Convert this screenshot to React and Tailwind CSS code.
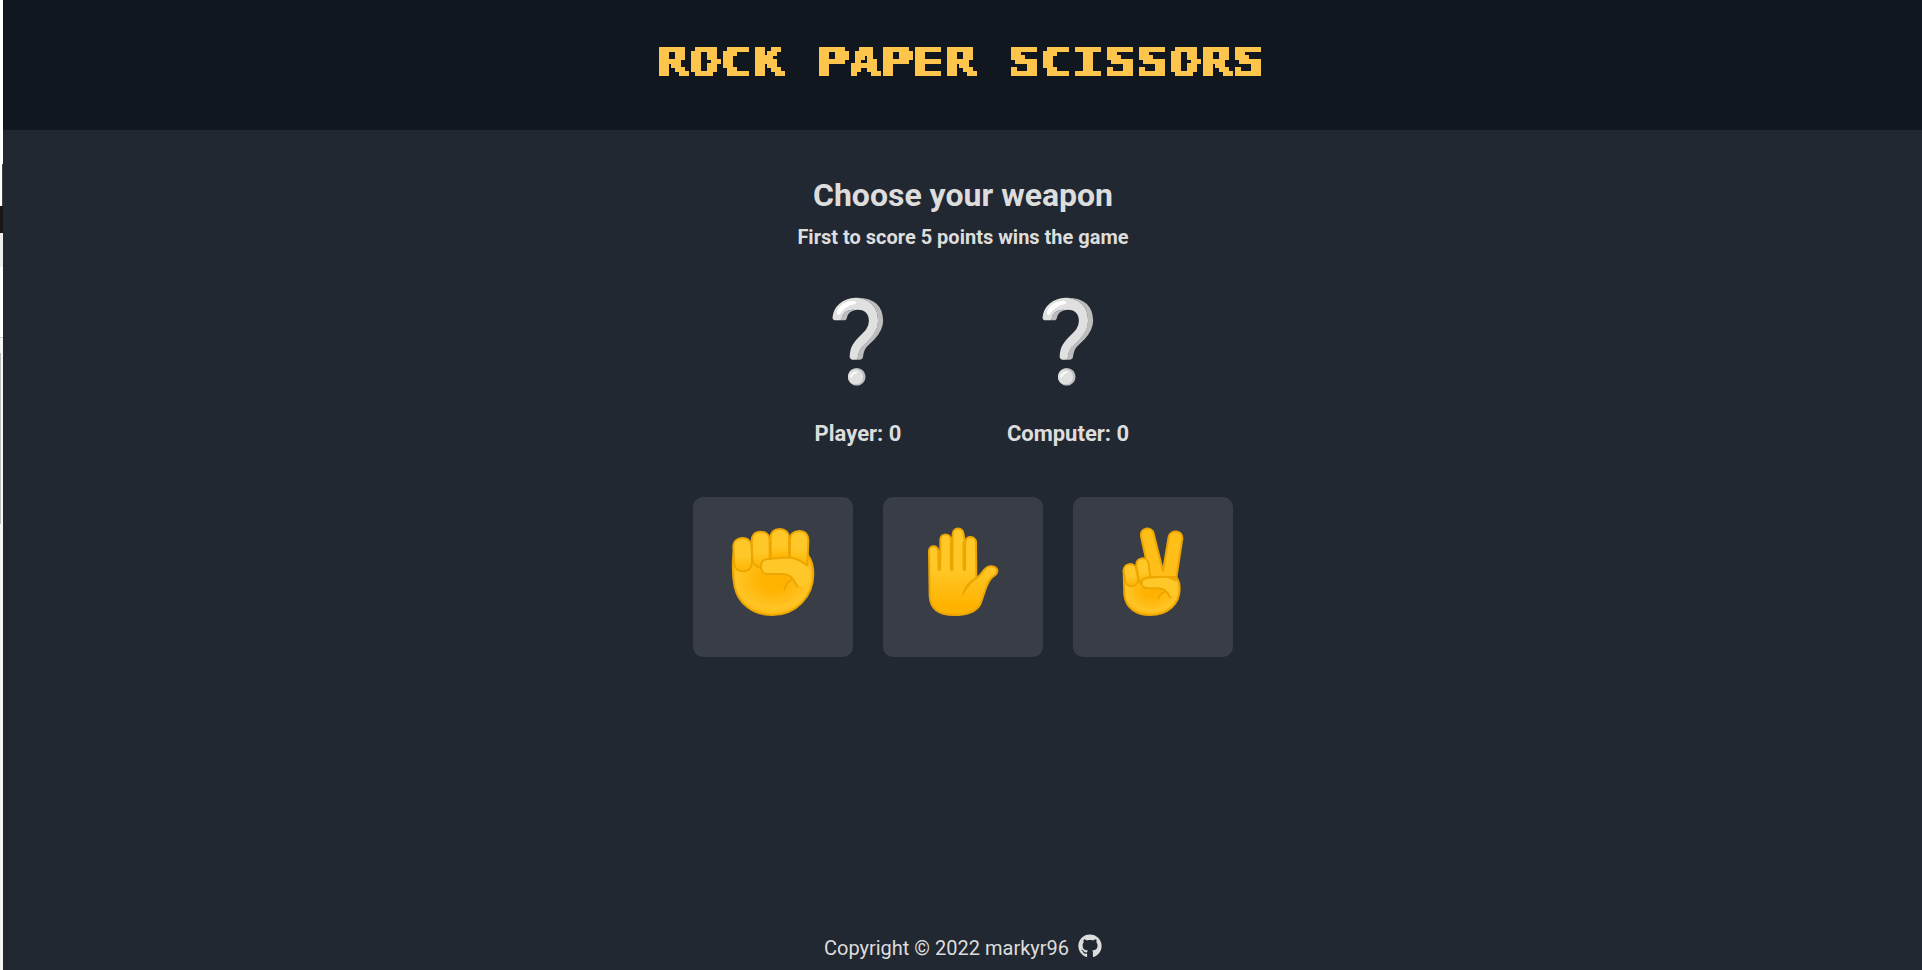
import { FaGithub } from "react-icons/fa";

const SKIN = "#ffc828";
const EDGE = "#eda600";

function SharedDefs() {
  return (
    <svg width="0" height="0" className="absolute" aria-hidden="true">
      <defs>
        <linearGradient id="skin" x1="0" y1="0" x2="0" y2="1">
          <stop offset="0.45" stopColor={SKIN} />
          <stop offset="0.9" stopColor="#ffb300" />
        </linearGradient>
        <radialGradient id="palm" cx="0.5" cy="0.45" r="0.6">
          <stop offset="0.25" stopColor="#ffb300" />
          <stop offset="0.75" stopColor="#ffc425" />
          <stop offset="1" stopColor="#ffb505" />
        </radialGradient>
        <linearGradient id="finger" x1="0" y1="0" x2="0" y2="1">
          <stop offset="0.55" stopColor={SKIN} />
          <stop offset="1" stopColor="#ffb300" />
        </linearGradient>
        {/* Samples one pixel per 4x4 cell, grows it to fill the cell, then emboldens. */}
        <filter id="pixelate" x="0" y="0" width="100%" height="100%" colorInterpolationFilters="sRGB">
          <feFlood x="1" y="1" width="1" height="1" floodColor="#000" result="dot" />
          <feOffset in="dot" dx="0" dy="0" x="0" y="0" width="4" height="4" result="cell" />
          <feTile in="cell" result="grid" />
          <feComposite in="SourceGraphic" in2="grid" operator="in" result="pts" />
          <feComponentTransfer in="pts" result="hard">
            <feFuncA type="discrete" tableValues="0 1" />
          </feComponentTransfer>
          <feMorphology in="hard" operator="dilate" radius="1" result="three" />
          <feOffset in="three" dx="1" dy="0" result="r" />
          <feOffset in="three" dx="0" dy="1" result="d" />
          <feOffset in="three" dx="1" dy="1" result="rd" />
          <feMerge result="block">
            <feMergeNode in="three" />
            <feMergeNode in="r" />
            <feMergeNode in="d" />
            <feMergeNode in="rd" />
          </feMerge>
          <feOffset in="block" dx="-2" dy="0" result="bl" />
          <feMerge result="wide">
            <feMergeNode in="block" />
            <feMergeNode in="bl" />
          </feMerge>
          <feOffset in="wide" dx="0" dy="-1" result="up" />
          <feMerge>
            <feMergeNode in="wide" />
            <feMergeNode in="up" />
          </feMerge>
        </filter>
      </defs>
    </svg>
  );
}

function Rock() {
  return (
    <svg viewBox="-1 0 480 480" className="size-40" fill="url(#finger)" stroke={EDGE} strokeWidth="6" strokeLinejoin="round" strokeLinecap="round">
      <path fill="url(#palm)" d="M121 165C117 200 119 245 124 270C136 322 180 354 238 354C308 354 360 298 360 230C360 205 354 188 344 175Z" />
      <path d="M290 128C290 112 301 102 318 102C335 102 345 113 345 130L342 204L290 184Z" />
      <path d="M232 122C232 106 242 96 259 96C276 96 287 106 287 124L287 184L232 186Z" />
      <path d="M175 132C175 115 185 104 201 104C218 104 229 114 229 130L229 184C216 188 208 198 208 214C192 212 178 202 177 184Z" />
      <path d="M120 150C120 133 131 123 147 123C164 123 175 134 175 152L176 192C176 212 166 223 150 223C134 223 123 213 122 195Z" />
      <path fill={SKIN} stroke="none" d="M220 187C250 185 280 181 300 186C318 190 334 197 344 206L350 225C350 255 336 268 314 268C303 250 298 234 270 231L222 231C196 229 197 189 220 187Z" />
      <path fill="none" d="M342 206C326 193 306 183 284 181C260 182 240 186 222 186C196 188 196 228 221 231L266 231C286 231 294 237 301 250C306 260 309 263 313 268M295 247C283 254 276 264 273 278" />
    </svg>
  );
}

function Paper() {
  return (
    <svg viewBox="0 0 480 480" className="size-40" stroke={EDGE} strokeWidth="6" strokeLinejoin="round" strokeLinecap="round">
      <path fill="url(#skin)" d="M138 162C138 143 165 143 166 162L172 185L172 128C172 107 203 107 204 128L208 150L209 112C209 89 241 89 242 112L246 140L247 135C247 115 279 115 279 136L280 242C295 240 302 208 321 208C338 206 347 218 341 229C335 236 328 240 322 247C307 266 302 300 290 325C276 346 250 354 212 354C168 354 142 336 140 296Z" />
      <path fill="none" strokeWidth="11" d="M169 168V217M206 135V217M244 138V217" />
      <path fill={EDGE} stroke="none" d="M283 239C260 248 238 270 237 302C246 284 257 261 287 242Z" />
    </svg>
  );
}

function Scissors() {
  return (
    <svg viewBox="-1 0 480 480" className="size-40" stroke={EDGE} strokeWidth="6" strokeLinejoin="round" strokeLinecap="round">
      <path fill="#ffbe18" d="M203 118C198 91 235 86 241 110L269 222L286 120C291 96 329 98 327 124L308 250L232 250Z" />
      <path fill="url(#palm)" d="M151 220L153 292C157 332 187 354 231 354C284 354 319 320 319 275C319 258 315 248 308 240L240 240Z" />
      <path fill="url(#finger)" d="M189 204C188 180 222 176 226 201L230 240C214 243 209 250 203 260C193 249 194 230 189 204Z" />
      <path fill="url(#finger)" d="M151 222C150 197 184 194 189 216L194 244C195 275 159 275 155 249Z" />
      <path fill={SKIN} stroke="none" d="M222 242L270 238C290 240 310 245 313 260L310 292L290 298C280 282 275 275 250 274L222 274C200 270 201 246 222 242Z" />
      <path fill="none" d="M308 250C290 239 270 237 248 241L223 242C199 245 198 271 222 274L252 274C273 275 281 282 291 302M275 284C263 288 258 294 255 304" />
    </svg>
  );
}

function Score({ label }) {
  return (
    <div className="flex w-[150px] flex-col items-center">
      <div className="flex h-[120px] items-center text-[80px] leading-none">❔</div>
      <p className="mt-[17px] text-[22px] leading-[30px] font-bold whitespace-nowrap">{label}</p>
    </div>
  );
}

function Weapon({ name, children }) {
  return (
    <button aria-label={name} className="size-40 overflow-hidden rounded-[10px] bg-[#393e46]">
      {children}
    </button>
  );
}

export default function App() {
  return (
    <div className="flex h-[970px] w-full overflow-hidden bg-[#222831] font-['Roboto',sans-serif] text-[#dddddd]">
      <SharedDefs />
      <div className="flex w-[3px] shrink-0 flex-col bg-[#f5f5f5]">
        <div className="h-[164px] bg-white" />
        <div className="h-[42px] border-r border-[#444] bg-white" />
        <div className="h-[27px] bg-[#1a1517]" />
        <div className="h-[34px] bg-[#eeeeee]" />
        <div className="h-[70px] bg-white" />
        <div className="h-px bg-[#cccccc]" />
        <div className="h-[15px]" />
        <div className="h-[171px] border-l border-[#bbbbbb]" />
      </div>
      <div className="flex flex-1 flex-col items-center">
        <header className="flex h-[130px] w-full bg-[#10171f] pt-[40px] pl-[654px]">
          <h1 className="h-[48px] w-[616px] text-[#fdc54c] [filter:url(#pixelate)]">
            <span className="block w-[457px] origin-top-left scale-x-[1.329] font-['DejaVu_Sans_Mono',monospace] text-[40px] leading-[44px] font-bold whitespace-nowrap">ROCK PAPER SCISSORS</span>
          </h1>
        </header>
        <main className="flex flex-1 flex-col items-center pt-[45px] pl-px">
          <h2 className="text-[32px] leading-[40px] font-bold">Choose your weapon</h2>
          <p className="mt-[8px] text-[20px] leading-[28px] font-bold">First to score 5 points wins the game</p>
          <div className="mt-[31px] flex gap-[60px]">
            <Score label="Player: 0" />
            <Score label="Computer: 0" />
          </div>
          <div className="mt-[48px] flex gap-[30px]">
            <Weapon name="Rock"><Rock /></Weapon>
            <Weapon name="Paper"><Paper /></Weapon>
            <Weapon name="Scissors"><Scissors /></Weapon>
          </div>
        </main>
        <footer className="flex h-[45px] items-center gap-[9px] pl-px text-[20px]">
          <span>Copyright © 2022 markyr96</span>
          <FaGithub className="mb-[3px] size-6" />
        </footer>
      </div>
    </div>
  );
}
